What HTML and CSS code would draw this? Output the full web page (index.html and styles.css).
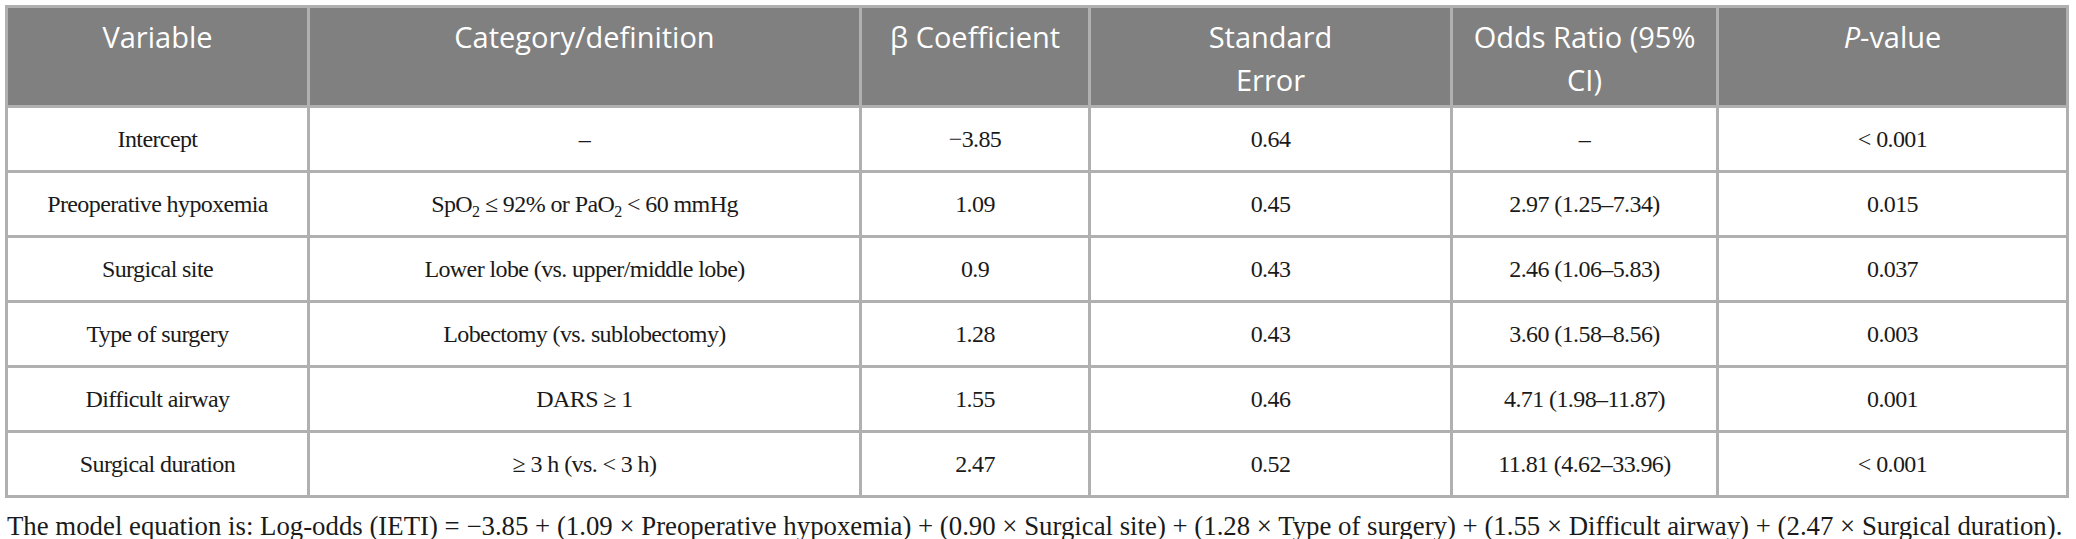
FILE: index.html
```html
<!DOCTYPE html>
<html>
<head>
<meta charset="utf-8">
<link rel="stylesheet" href="styles.css">
</head>
<body>
<div class="wrap">
<table class="tbl">
<thead>
<tr>
<th class="c1">Variable</th>
<th class="c2">Category/definition</th>
<th class="c3">β Coefficient</th>
<th class="c4">Standard<br>Error</th>
<th class="c5">Odds Ratio (95%<br>CI)</th>
<th class="c6"><i>P</i>-value</th>
</tr>
</thead>
<tbody>
<tr><td>Intercept</td><td>–</td><td>−3.85</td><td>0.64</td><td>–</td><td>&lt; 0.001</td></tr>
<tr><td>Preoperative hypoxemia</td><td>SpO<sub>2</sub> ≤ 92% or PaO<sub>2</sub> &lt; 60 mmHg</td><td>1.09</td><td>0.45</td><td>2.97 (1.25–7.34)</td><td>0.015</td></tr>
<tr><td>Surgical site</td><td>Lower lobe (vs. upper/middle lobe)</td><td>0.9</td><td>0.43</td><td>2.46 (1.06–5.83)</td><td>0.037</td></tr>
<tr><td>Type of surgery</td><td>Lobectomy (vs. sublobectomy)</td><td>1.28</td><td>0.43</td><td>3.60 (1.58–8.56)</td><td>0.003</td></tr>
<tr><td>Difficult airway</td><td>DARS ≥ 1</td><td>1.55</td><td>0.46</td><td>4.71 (1.98–11.87)</td><td>0.001</td></tr>
<tr><td>Surgical duration</td><td>≥ 3 h (vs. &lt; 3 h)</td><td>2.47</td><td>0.52</td><td>11.81 (4.62–33.96)</td><td>&lt; 0.001</td></tr>
</tbody>
</table>
<p class="note">The model equation is: Log-odds (IETI) = −3.85 + (1.09 × Preoperative hypoxemia) + (0.90 × Surgical site) + (1.28 × Type of surgery) + (1.55 × Difficult airway) + (2.47 × Surgical duration).</p>
</div>
</body>
</html>
```
FILE: styles.css
```css
html, body {
  margin: 0;
  padding: 0;
  background: #ffffff;
}
.wrap {
  padding: 5px 0 0 5px;
}
.tbl {
  border-collapse: collapse;
  table-layout: fixed;
  width: 2064px;
  border: 3px solid #b0b0b0;
}
.tbl th {
  background: #808080;
  color: #ffffff;
  font-family: "Open Sans", "Noto Sans", sans-serif;
  font-weight: 400;
  font-size: 29px;
  line-height: 43px;
  height: 100px;
  padding: 7px 4px 0;
  vertical-align: top;
  text-align: center;
  border: 3px solid #b0b0b0;
  box-sizing: border-box;
}
.tbl th.c1 { width: 302px; }
.tbl th.c2 { width: 552px; }
.tbl th.c3 { width: 229px; }
.tbl th.c4 { width: 362px; }
.tbl th.c5 { width: 266px; }
.tbl th.c6 { width: 350px; }
.tbl td {
  font-family: "Liberation Serif", "Times New Roman", serif;
  font-size: 24px;
  letter-spacing: -0.6px;
  color: #1a1a1a;
  text-align: center;
  vertical-align: middle;
  height: 65px;
  padding: 0 4px;
  border: 3px solid #b0b0b0;
  box-sizing: border-box;
}
.tbl td sub {
  font-size: 16px;
  vertical-align: -5px;
  line-height: 0;
}
.note {
  margin: 13px 0 0 2px;
  font-family: "Liberation Serif", "Times New Roman", serif;
  font-size: 26.8px;
  line-height: 30px;
  color: #1a1a1a;
  white-space: nowrap;
}
```
